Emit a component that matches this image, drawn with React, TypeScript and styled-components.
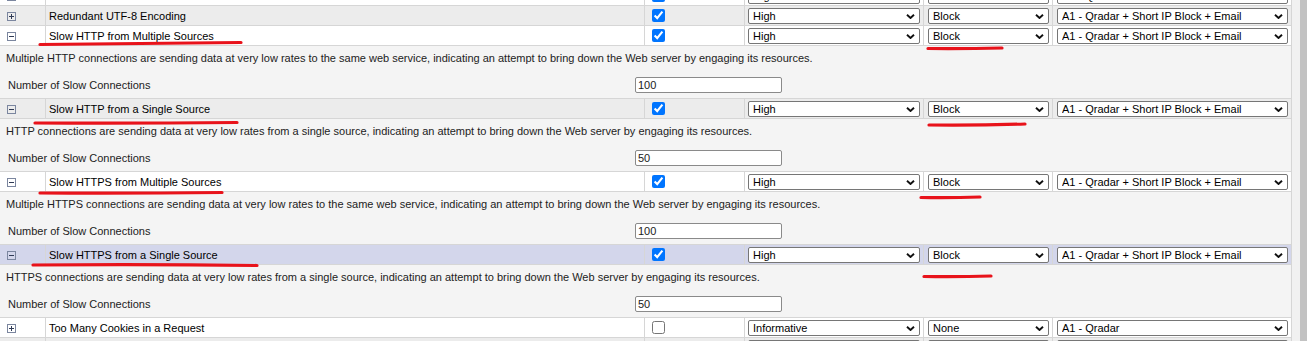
import styled, { createGlobalStyle } from 'styled-components';

type Rule = {
  name: string;
  enabled: boolean;
  severity: string;
  action: string;
  response: string;
  highlighted?: boolean;
  description?: string;
  paramLabel?: string;
  paramValue?: string;
};

const FULL_RESPONSE = 'A1 - Qradar + Short IP Block + Email';

// first and last rows are scrolled almost out of view, their names never show
const RULES: Rule[] = [
  { name: '', enabled: true, severity: 'High', action: 'Block', response: FULL_RESPONSE },
  { name: 'Redundant UTF-8 Encoding', enabled: true, severity: 'High', action: 'Block', response: FULL_RESPONSE },
  {
    name: 'Slow HTTP from Multiple Sources',
    enabled: true,
    severity: 'High',
    action: 'Block',
    response: FULL_RESPONSE,
    description:
      'Multiple HTTP connections are sending data at very low rates to the same web service, indicating an attempt to bring down the Web server by engaging its resources.',
    paramLabel: 'Number of Slow Connections',
    paramValue: '100'
  },
  {
    name: 'Slow HTTP from a Single Source',
    enabled: true,
    severity: 'High',
    action: 'Block',
    response: FULL_RESPONSE,
    description:
      'HTTP connections are sending data at very low rates from a single source, indicating an attempt to bring down the Web server by engaging its resources.',
    paramLabel: 'Number of Slow Connections',
    paramValue: '50'
  },
  {
    name: 'Slow HTTPS from Multiple Sources',
    enabled: true,
    severity: 'High',
    action: 'Block',
    response: FULL_RESPONSE,
    description:
      'Multiple HTTPS connections are sending data at very low rates to the same web service, indicating an attempt to bring down the Web server by engaging its resources.',
    paramLabel: 'Number of Slow Connections',
    paramValue: '100'
  },
  {
    name: 'Slow HTTPS from a Single Source',
    enabled: true,
    severity: 'High',
    action: 'Block',
    response: FULL_RESPONSE,
    highlighted: true,
    description:
      'HTTPS connections are sending data at very low rates from a single source, indicating an attempt to bring down the Web server by engaging its resources.',
    paramLabel: 'Number of Slow Connections',
    paramValue: '50'
  },
  { name: 'Too Many Cookies in a Request', enabled: false, severity: 'Informative', action: 'None', response: 'A1 - Qradar' },
  { name: '', enabled: true, severity: '', action: '', response: '' }
];

const GlobalStyle = createGlobalStyle`
  html, body {
    margin: 0;
    padding: 0;
    background: #ffffff;
    overflow: hidden;
  }
  body {
    font-family: "Liberation Sans", Arial, sans-serif;
    font-size: 11px;
    color: #000;
  }
`;

const Viewport = styled.div`
  position: relative;
  display: flex;
  width: 1307px;
  height: 341px;
  overflow: hidden;
`;

const Table = styled.div`
  width: 1292px;
  flex: none;
  margin-top: -14px;
`;

const ScrollTrack = styled.div`
  flex: 1;
  display: flex;
  justify-content: flex-end;
  background: #f1f1f1;
`;

const ScrollThumb = styled.div`
  width: 7px;
  background: #c2c2c2;
`;

const HeaderRow = styled.div<{ $bg: string }>`
  display: grid;
  grid-template-columns: 46px 599px 100px 179px 129px 239px;
  height: 20px;
  box-sizing: border-box;
  border-bottom: 1px solid #d6d6d6;
  background: ${(p) => p.$bg};
`;

const Cell = styled.div<{ $pl?: number; $pr?: number }>`
  display: flex;
  align-items: center;
  box-sizing: border-box;
  border-right: 1px solid #d6d6d6;
  padding-left: ${(p) => p.$pl ?? 0}px;
  padding-right: ${(p) => p.$pr ?? 0}px;
  min-width: 0;
  white-space: nowrap;
`;

const ToggleBox = styled.svg`
  display: block;
  width: 9px;
  height: 9px;
  margin-top: 1px;
`;

const RuleName = styled.span`
  font-size: 11px;
  color: #000;
`;

const CheckBox = styled.input`
  width: 13px;
  height: 13px;
  margin: 0;
`;

const SelectWrap = styled.div`
  position: relative;
  width: 100%;
  height: 16px;
`;

const Select = styled.select`
  appearance: none;
  -webkit-appearance: none;
  display: block;
  width: 100%;
  height: 16px;
  box-sizing: border-box;
  border: 1px solid #767676;
  border-radius: 2px;
  background: #fff;
  padding: 0 16px 0 4px;
  font-family: "Liberation Sans", Arial, sans-serif;
  font-size: 11px;
  line-height: 14px;
  color: #000;
  outline: none;
`;

const Chevron = styled.svg`
  position: absolute;
  right: 5px;
  top: 6px;
  width: 9px;
  height: 5px;
  pointer-events: none;
`;

const Detail = styled.div`
  height: 53px;
  box-sizing: border-box;
  padding: 5px 0 0 6px;
  background: #f4f4f4;
  border-bottom: 1px solid #d6d6d6;
  border-right: 1px solid #d6d6d6;
  color: #222;
`;

const Description = styled.div`
  line-height: 14px;
  white-space: nowrap;
`;

const ParamRow = styled.div`
  display: grid;
  grid-template-columns: 629px 147px;
  align-items: center;
  margin-top: 12px;
  height: 16px;
`;

const ParamLabel = styled.span`
  padding-left: 2px;
`;

const ParamInput = styled.input`
  width: 147px;
  height: 16px;
  box-sizing: border-box;
  border: 1px solid #8a8a8a;
  border-radius: 2px;
  padding: 0 2px;
  font-family: "Liberation Sans", Arial, sans-serif;
  font-size: 11px;
  color: #1a1a1a;
  background: #fff;
  outline: none;
`;

const Annotations = styled.svg`
  position: absolute;
  left: 0;
  top: 0;
  width: 1307px;
  height: 341px;
  pointer-events: none;
`;

function Toggle({ expanded }: { expanded: boolean }) {
  return (
    <ToggleBox viewBox="0 0 9 9">
      <rect x="0.5" y="0.5" width="8" height="8" fill="none" stroke="#7b869f" />
      <line x1="2" y1="4.5" x2="7" y2="4.5" stroke="#2f3a55" />
      {!expanded && <line x1="4.5" y1="2" x2="4.5" y2="7" stroke="#2f3a55" />}
    </ToggleBox>
  );
}

function Dropdown({ value }: { value: string }) {
  return (
    <SelectWrap>
      <Select value={value} onChange={() => {}}>
        <option>{value}</option>
      </Select>
      <Chevron viewBox="0 0 9 5">
        <polyline points="1,0.8 4.5,4 8,0.8" fill="none" stroke="#111" strokeWidth="1.9" />
      </Chevron>
    </SelectWrap>
  );
}

function RuleRow({ rule, index }: { rule: Rule; index: number }) {
  const bg = rule.highlighted ? '#d3d6eb' : index % 2 === 1 ? '#ececec' : '#ffffff';
  const expanded = !!rule.description;
  return (
    <>
      <HeaderRow $bg={bg}>
        <Cell $pl={7}>
          <Toggle expanded={expanded} />
        </Cell>
        <Cell $pl={3}>
          <RuleName>{rule.name}</RuleName>
        </Cell>
        <Cell $pl={7}>
          <CheckBox type="checkbox" checked={rule.enabled} onChange={() => {}} />
        </Cell>
        <Cell $pl={3} $pr={3}>
          <Dropdown value={rule.severity} />
        </Cell>
        <Cell $pl={4} $pr={3}>
          <Dropdown value={rule.action} />
        </Cell>
        <Cell $pl={4} $pr={3}>
          <Dropdown value={rule.response} />
        </Cell>
      </HeaderRow>
      {expanded && (
        <Detail>
          <Description>{rule.description}</Description>
          <ParamRow>
            <ParamLabel>{rule.paramLabel}</ParamLabel>
            <ParamInput type="text" value={rule.paramValue} onChange={() => {}} />
          </ParamRow>
        </Detail>
      )}
    </>
  );
}

// hand-drawn red marks over the screenshot
const MARKS = [
  'M40 44.5 Q140 43.5 241 42.5',
  'M928 48.5 Q965 48.8 1002 48',
  'M35 123 Q135 123.5 237 122.5',
  'M929 125 Q977 125.5 1025 124',
  'M40 193 Q130 193.5 222 192.5',
  'M921 197.5 Q950 198 980 197',
  'M33 265 Q145 264 257 265.5',
  'M924 276.5 Q958 277 991 276'
];

export default function App() {
  return (
    <>
      <GlobalStyle />
      <Viewport>
        <Table>
          {RULES.map((rule, i) => (
            <RuleRow key={i} rule={rule} index={i} />
          ))}
        </Table>
        <ScrollTrack>
          <ScrollThumb />
        </ScrollTrack>
        <Annotations viewBox="0 0 1307 341">
          {MARKS.map((d) => (
            <path key={d} d={d} fill="none" stroke="#e8131b" strokeWidth="3.2" strokeLinecap="round" />
          ))}
        </Annotations>
      </Viewport>
    </>
  );
}
